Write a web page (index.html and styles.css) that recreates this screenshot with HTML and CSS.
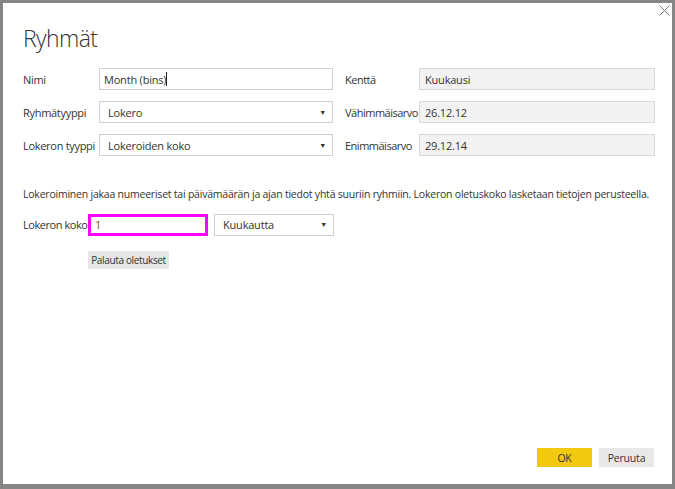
FILE: index.html
```html
<!DOCTYPE html>
<html lang="fi">
<head>
<meta charset="utf-8">
<link rel="stylesheet" href="styles.css">
</head>
<body>
<div class="frame">
  <div class="dialog">
    <button class="close" aria-label="Sulje">
      <svg width="11" height="11" viewBox="0 0 11 11"><path d="M0.5 0.5 L10.5 10.5 M10.5 0.5 L0.5 10.5" stroke="#777" stroke-width="1" fill="none"/></svg>
    </button>
    <h1 class="title">Ryhmät</h1>
    <div class="grid">
      <span class="label">Nimi</span>
      <div class="field"><span class="val">Month (bins)</span><span class="caret"></span></div>
      <span class="label right">Kenttä</span>
      <div class="field ro"><span class="val">Kuukausi</span></div>

      <span class="label">Ryhmätyyppi</span>
      <div class="field select"><span class="val">Lokero</span><span class="arrow">▼</span></div>
      <span class="label right">Vähimmäisarvo</span>
      <div class="field ro"><span class="val">26.12.12</span></div>

      <span class="label">Lokeron tyyppi</span>
      <div class="field select"><span class="val">Lokeroiden koko</span><span class="arrow">▼</span></div>
      <span class="label right">Enimmäisarvo</span>
      <div class="field ro"><span class="val">29.12.14</span></div>
    </div>
    <p class="desc">Lokeroiminen jakaa numeeriset tai päivämäärän ja ajan tiedot yhtä suuriin ryhmiin. Lokeron oletuskoko lasketaan tietojen perusteella.</p>
    <div class="sizerow">
      <span class="label small">Lokeron koko</span>
      <div class="sizebox"><span class="num">1</span></div>
      <div class="field select unit"><span class="val">Kuukautta</span><span class="arrow">▼</span></div>
    </div>
    <div class="resetrow">
      <button class="btn reset">Palauta oletukset</button>
    </div>
    <div class="footer">
      <button class="btn ok">OK</button>
      <button class="btn cancel">Peruuta</button>
    </div>
  </div>
</div>
</body>
</html>
```
FILE: styles.css
```css
* { box-sizing: border-box; }
html, body { margin: 0; padding: 0; }
body {
  width: 675px;
  height: 489px;
  background: #858585;
  font-family: "Open Sans", "Noto Sans", sans-serif;
  color: #333;
  overflow: hidden;
}
.frame {
  height: 489px;
  padding: 3px 3px 5px 3px;
}
.dialog {
  position: relative;
  height: 100%;
  background: #fff;
  padding: 0 18px 17px 20px;
  display: flex;
  flex-direction: column;
}
.close {
  position: absolute;
  right: 2px;
  top: 2px;
  border: 0;
  background: transparent;
  padding: 0;
  width: 11px;
  height: 11px;
  display: block;
}
.close svg { display: block; }
.title {
  margin: 0;
  font-weight: 300;
  font-size: 23px;
  line-height: 32px;
  margin-top: 19px;
  color: #333;
  letter-spacing: -0.6px;
}
.grid {
  display: grid;
  grid-template-columns: 76px 234px 86px 236px;
  grid-auto-rows: 22px;
  row-gap: 11px;
  margin-top: 14px;
  align-items: center;
}
.label {
  font-size: 11px;
  white-space: nowrap;
  color: #333;
  letter-spacing: -0.3px;
}
.label.right { padding-left: 12px; letter-spacing: -0.5px; }
.field {
  height: 22px;
  border: 1px solid #cfcfcf;
  display: flex;
  align-items: center;
  padding-left: 4px;
  font-size: 11px;
  color: #333;
  letter-spacing: -0.2px;
}
.caret {
  display: inline-block;
  width: 1px;
  height: 14px;
  background: #222;
}
.field.select { padding-left: 8px; padding-right: 6px; }
.field.select .val { flex: 1; }
.arrow {
  font-size: 7px;
  color: #333;
  line-height: 1;
}
.field.ro {
  background: #f2f2f2;
  border-color: #d9d9d9;
  padding-left: 5px;
}
.desc {
  margin: 31px 0 0 0;
  font-size: 10.5px;
  line-height: 15px;
  color: #333;
  letter-spacing: -0.22px;
  white-space: nowrap;
}
.sizerow {
  display: flex;
  align-items: center;
  margin-top: 11px;
  height: 23px;
}
.label.small { width: 65px; letter-spacing: -0.45px; }
.sizebox {
  width: 120px;
  height: 22px;
  border: 3px solid #ff00ff;
  display: flex;
  align-items: center;
  padding-left: 4px;
  font-size: 11px;
  color: #8a4b14;
}
.field.unit {
  width: 120px;
  margin-left: 6px;
}
.resetrow {
  margin-top: 11px;
  padding-left: 65px;
}
.btn {
  font-family: "Open Sans", "Noto Sans", sans-serif;
  font-size: 10.5px;
  border: 0;
  color: #333;
  padding: 0;
  letter-spacing: -0.2px;
  white-space: nowrap;
}
.reset {
  background: #e6e6e6;
  height: 18px;
  width: 81px;
  font-size: 10px;
  letter-spacing: -0.35px;
}
.footer {
  margin-top: auto;
  display: flex;
  justify-content: flex-end;
  gap: 7px;
}
.ok {
  background: #f2c811;
  width: 55px;
  height: 19px;
}
.cancel {
  background: #e8e8e8;
  width: 55px;
  height: 19px;
}
```
